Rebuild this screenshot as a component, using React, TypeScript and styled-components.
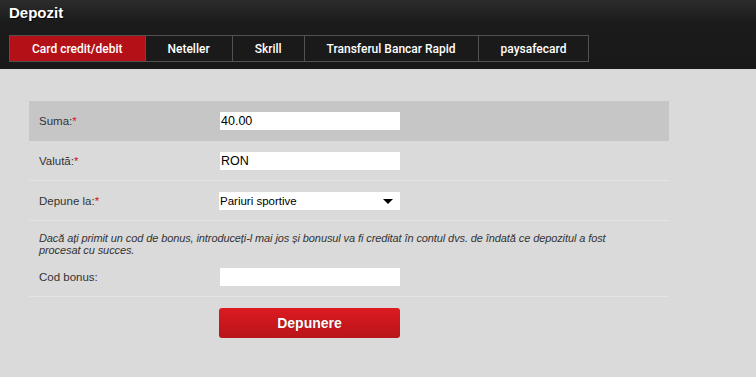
import React from 'react';
import styled, { createGlobalStyle } from 'styled-components';

const GlobalStyle = createGlobalStyle`
  html, body {
    margin: 0;
    padding: 0;
    background: #dadada;
    font-family: 'Liberation Sans', Arial, sans-serif;
  }
`;

const tabs = ['Card credit/debit', 'Neteller', 'Skrill', 'Transferul Bancar Rapid', 'paysafecard'];

type FieldRowProps = { $highlight?: boolean };

export default function App() {
  return (
    <Page>
      <GlobalStyle />
      <Header>
        <Title>Depozit</Title>
        <TabBar>
          {tabs.map((t, i) => (
            <Tab key={t} $active={i === 0}>
              {t}
            </Tab>
          ))}
        </TabBar>
      </Header>

      <Body>
        <Form>
          <FieldRow $highlight>
            <Label>
              Suma:<Req>*</Req>
            </Label>
            <TextInput defaultValue="40.00" />
          </FieldRow>
          <FieldRow>
            <Label>
              Valută:<Req>*</Req>
            </Label>
            <TextInput defaultValue="RON" />
          </FieldRow>
          <FieldRow>
            <Label>
              Depune la:<Req>*</Req>
            </Label>
            <Select>Pariuri sportive</Select>
          </FieldRow>

          <Note>
            Dacă ați primit un cod de bonus, introduceți-l mai jos și bonusul va fi creditat în contul
            dvs. de îndată ce depozitul a fost procesat cu succes.
          </Note>
          <FieldRow>
            <Label>Cod bonus:</Label>
            <TextInput />
          </FieldRow>

          <Actions>
            <SubmitButton type="button">Depunere</SubmitButton>
          </Actions>
        </Form>
      </Body>
    </Page>
  );
}

const Page = styled.div`
  width: 756px;
  min-height: 377px;
  background: #dadada;
`;

const Header = styled.header`
  height: 69px;
  padding: 0 9px;
  box-sizing: border-box;
  background: linear-gradient(to bottom, #2c2c2c 0px, #1b1b1b 22px, #191919 100%);
`;

const Title = styled.h1`
  margin: 0;
  height: 35px;
  padding-top: 4px;
  box-sizing: border-box;
  font-size: 15px;
  line-height: 18px;
  font-weight: bold;
  color: #fff;
  text-shadow: 1px 1px 1px #000;
`;

const TabBar = styled.nav`
  display: flex;
`;

const Tab = styled.div<{ $active?: boolean }>`
  height: 27px;
  box-sizing: border-box;
  padding: 0 22px;
  display: flex;
  align-items: center;
  justify-content: center;
  border: 1px solid #525252;
  margin-left: -1px;
  &:first-child {
    margin-left: 0;
  }
  background: ${(p) => (p.$active ? '#b31117' : '#1a1a1a')};
  color: #fff;
  font-family: Roboto, 'Liberation Sans', sans-serif;
  font-size: 12px;
  font-weight: 500;
  white-space: nowrap;
`;

const Body = styled.main`
  padding: 32px 29px 30px;
`;

const Form = styled.form`
  width: 640px;
`;

const FieldRow = styled.div<FieldRowProps>`
  display: grid;
  grid-template-columns: 181px 180px;
  align-items: center;
  height: 40px;
  box-sizing: border-box;
  padding: 1px 10px 0;
  background: ${(p) => (p.$highlight ? '#c6c6c6' : 'transparent')};
  border-bottom: 1px solid ${(p) => (p.$highlight ? '#c6c6c6' : '#e3e3e3')};
`;

const Label = styled.label`
  font-size: 11.5px;
  color: #333;
`;

const Req = styled.span`
  color: #d0141b;
`;

const TextInput = styled.input`
  width: 180px;
  height: 18px;
  box-sizing: border-box;
  border: none;
  outline: none;
  padding: 0 1px;
  background: #fff;
  font-family: 'Liberation Sans', Arial, sans-serif;
  font-size: 12.5px;
  color: #000;
`;

const Select = styled.div`
  position: relative;
  width: 181px;
  height: 18px;
  margin-left: -1px;
  box-sizing: border-box;
  padding: 0 1px;
  background: #fff;
  font-size: 11.5px;
  line-height: 18px;
  color: #000;

  &::after {
    content: '';
    position: absolute;
    right: 7px;
    top: 7px;
    border-left: 5px solid transparent;
    border-right: 5px solid transparent;
    border-top: 5px solid #000;
  }
`;

const Note = styled.p`
  margin: 0;
  padding: 11px 30px 1px 10px;
  font-size: 11px;
  line-height: 12px;
  letter-spacing: -0.1px;
  font-style: italic;
  color: #333;
`;

const Actions = styled.div`
  padding: 11px 0 0 190px;
`;

const SubmitButton = styled.button`
  width: 181px;
  height: 30px;
  border: none;
  border-radius: 3px;
  background: linear-gradient(to bottom, #dd1a21, #b8141a);
  color: #fff;
  font-family: 'Liberation Sans', Arial, sans-serif;
  font-size: 14px;
  font-weight: bold;
  text-shadow: 0 0 1px rgba(0, 0, 0, 0.4);
  cursor: pointer;
`;
